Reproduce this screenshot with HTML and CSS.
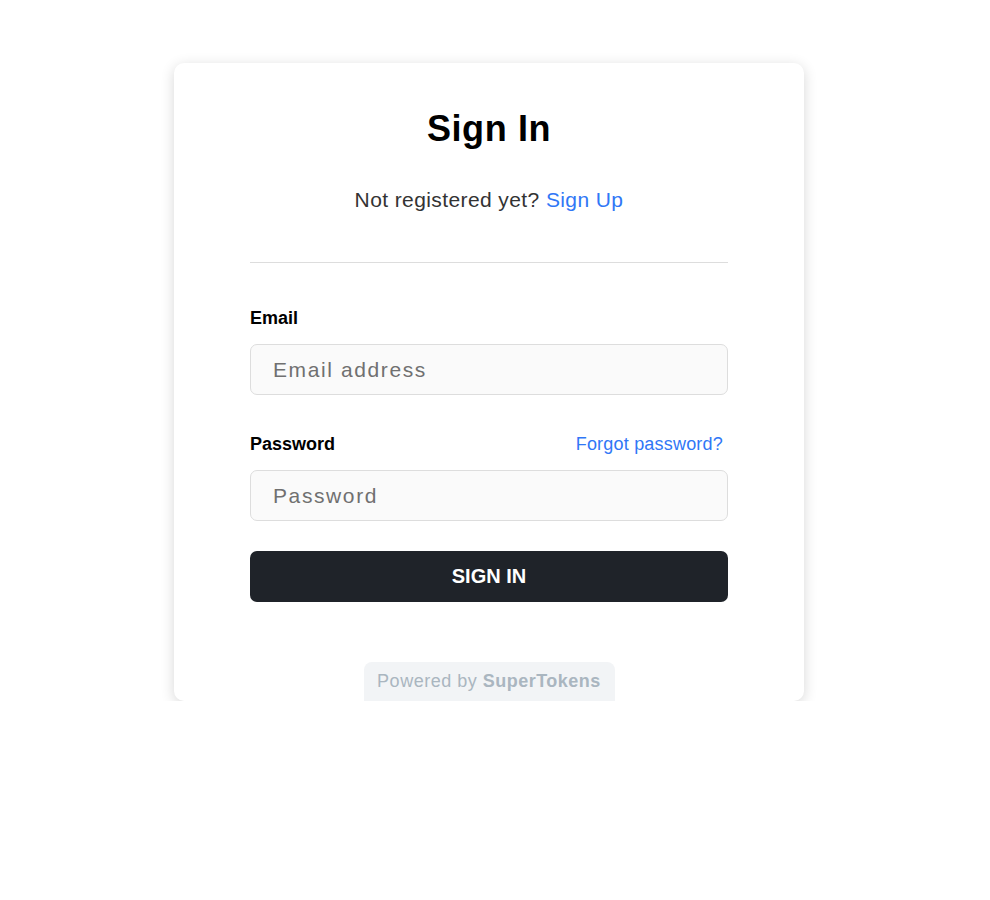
FILE: index.html
```html
<!DOCTYPE html>
<html lang="en">
<head>
<meta charset="utf-8">
<title>Sign In</title>
<link rel="stylesheet" href="styles.css">
</head>
<body>
<main class="page">
  <section class="card">
    <div class="content">
      <h1 class="title">Sign In</h1>
      <p class="subtitle">Not registered yet? <a class="link" href="#">Sign Up</a></p>
      <hr class="divider">
      <form class="form">
        <div class="field">
          <div class="label-row"><label class="label">Email</label></div>
          <input class="input" type="email" placeholder="Email address">
        </div>
        <div class="field">
          <div class="label-row"><label class="label">Password</label><a class="forgot" href="#">Forgot password?</a></div>
          <input class="input" type="password" placeholder="Password">
        </div>
        <button class="button" type="button">SIGN IN</button>
      </form>
    </div>
    <div class="powered">Powered by <b>SuperTokens</b></div>
  </section>
</main>
</body>
</html>
```
FILE: styles.css
```css
* { box-sizing: border-box; }
html, body { margin: 0; padding: 0; background: #fff; }
body { font-family: "Liberation Sans", Arial, sans-serif; }
.page { display: flex; justify-content: center; padding-top: 63px; padding-right: 12px; }
.card {
  width: 630px;
  height: 638px;
  background: #fff;
  border-radius: 10px;
  box-shadow: 0 3px 14px rgba(0,0,0,0.16);
  display: flex;
  flex-direction: column;
  align-items: center;
  overflow: hidden;
}
.content { width: 478px; display: flex; flex-direction: column; padding-top: 46px; }
.title {
  margin: 0;
  text-align: center;
  font-size: 36px;
  line-height: 40px;
  font-weight: 700;
  letter-spacing: 0.6px;
  color: #000;
}
.subtitle {
  margin: 39px 0 0;
  text-align: center;
  font-size: 21px;
  line-height: 24px;
  letter-spacing: 0.4px;
  color: #333;
}
.link { color: #3077f6; text-decoration: none; }
.divider { margin: 50px 0 0; border: 0; border-top: 1px solid #dddddd; height: 0; }
.form { display: flex; flex-direction: column; }
.field { display: flex; flex-direction: column; }
.field:first-child { margin-top: 43px; }
.field + .field { margin-top: 37px; }
.label-row { display: flex; justify-content: space-between; align-items: center; height: 24px; margin-bottom: 14px; }
.label { font-size: 18px; font-weight: 700; color: #000; }
.forgot { font-size: 18px; letter-spacing: 0.2px; color: #3077f6; text-decoration: none; margin-right: 5px; }
.input {
  height: 51px;
  width: 100%;
  border: 1px solid #dddddd;
  border-radius: 7px;
  background: #fafafa;
  padding: 0 22px;
  font-family: "Liberation Sans", Arial, sans-serif;
  font-size: 21px;
  letter-spacing: 1.6px;
  color: #222;
  outline: none;
}
.input::placeholder { color: #707070; }
.button {
  margin-top: 30px;
  height: 51px;
  width: 100%;
  border: 0;
  border-radius: 7px;
  background: #1f2329;
  color: #fff;
  font-family: "Liberation Sans", Arial, sans-serif;
  font-size: 20px;
  font-weight: 700;
}
.powered {
  margin-top: auto;
  width: 251px;
  height: 39px;
  padding-top: 9px;
  background: #f2f4f6;
  border-radius: 8px 8px 0 0;
  text-align: center;
  font-size: 18px;
  letter-spacing: 0.5px;
  color: #aab6c0;
}
.powered b { font-weight: 700; }
```
